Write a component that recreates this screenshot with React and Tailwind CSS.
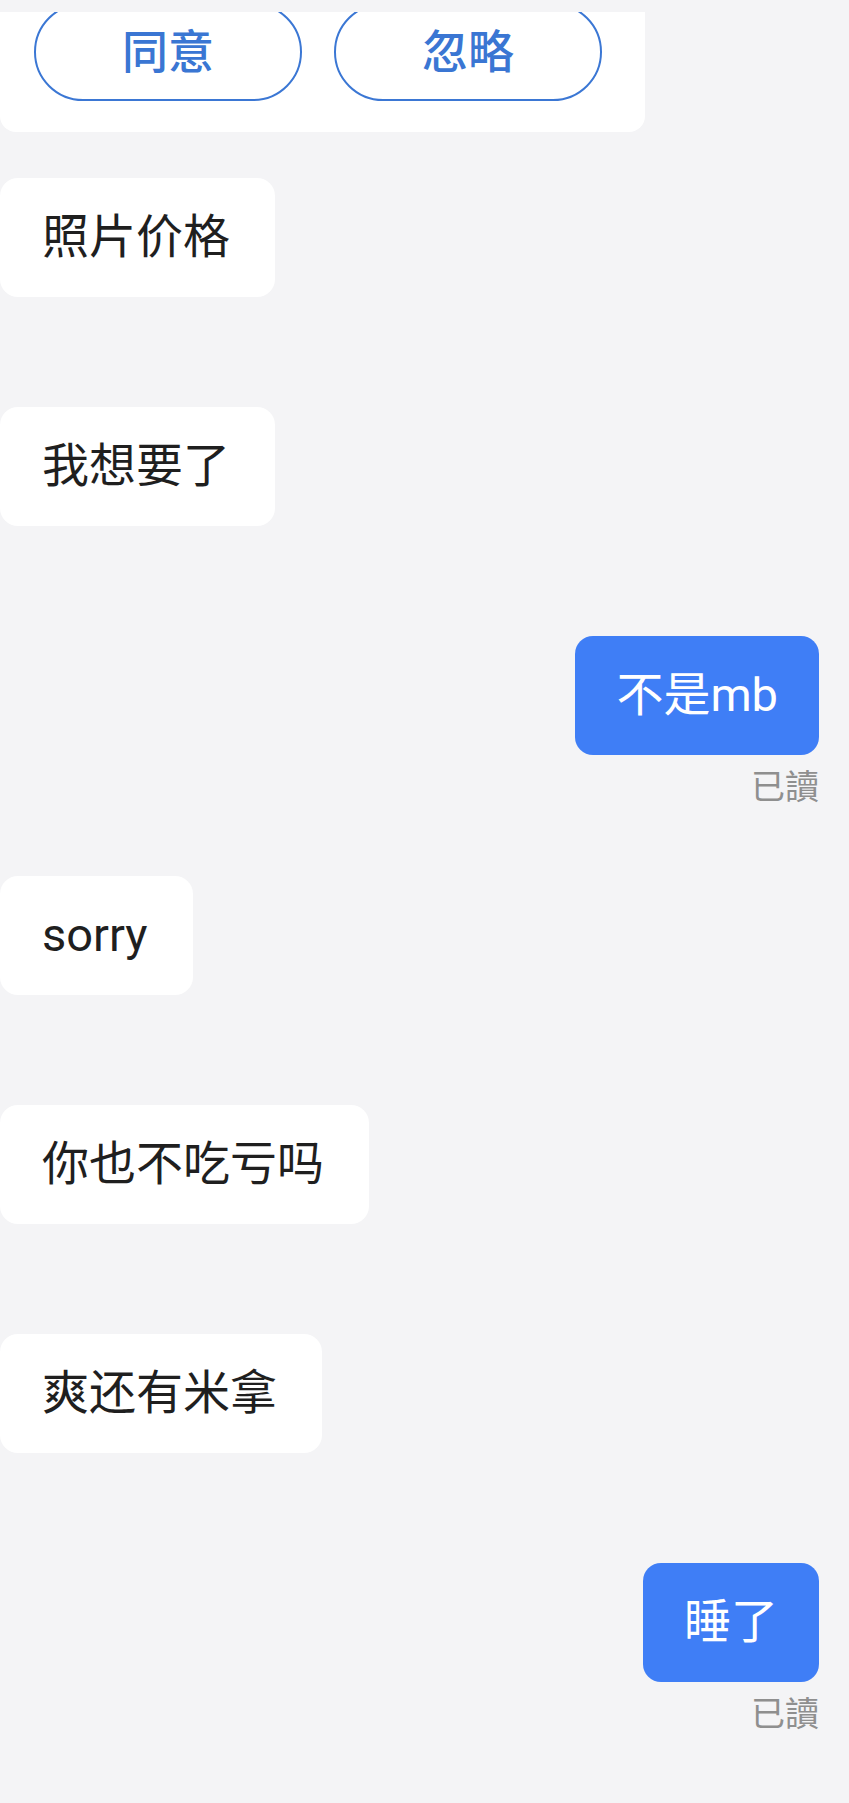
import React from "react";

const font = { fontFamily: 'Roboto, "Noto Sans CJK SC", "Noto Sans CJK TC", sans-serif' };

const messages = [
  { side: "left", text: "照片价格" },
  { side: "left", text: "我想要了" },
  { side: "right", text: "不是mb", read: true },
  { side: "left", text: "sorry" },
  { side: "left", text: "你也不吃亏吗" },
  { side: "left", text: "爽还有米拿" },
  { side: "right", text: "睡了", read: true },
];

function Bubble({ msg }) {
  if (msg.side === "right") {
    return (
      <div className="flex flex-col items-end pr-[30px] mb-[69px]">
        <div className="h-[119px] flex items-center px-[41px] rounded-[18px] bg-[#3f7ef6] text-white text-[47px]">
          {msg.text}
        </div>
        {msg.read && (
          <span className="mt-[12px] text-[34px] leading-[40px] text-[#8f8f8f]">已讀</span>
        )}
      </div>
    );
  }
  return (
    <div className="flex mb-[110px]">
      <div className="h-[119px] flex items-center pl-[42px] pr-[45px] rounded-[18px] bg-white text-[#1f1f1f] text-[47px]">
        {msg.text}
      </div>
    </div>
  );
}

export default function App() {
  return (
    <div className="w-[849px] min-h-[1803px] bg-[#f4f4f6] pt-[12px] overflow-hidden" style={font}>
      {/* Friend request card, scrolled partly out of view */}
      <div className="w-[645px] h-[120px] bg-white rounded-b-2xl overflow-hidden">
        <div className="flex gap-[32px] pl-[34px] mt-[-9px]">
          <button className="w-[268px] h-[98px] rounded-full border-2 border-[#3b77d4] text-[#3a76d3] text-[46px] font-medium">
            同意
          </button>
          <button className="w-[268px] h-[98px] rounded-full border-2 border-[#3b77d4] text-[#3a76d3] text-[46px] font-medium">
            忽略
          </button>
        </div>
      </div>

      <div className="mt-[46px]">
        {messages.map((m, i) => (
          <Bubble key={i} msg={m} />
        ))}
      </div>
    </div>
  );
}
